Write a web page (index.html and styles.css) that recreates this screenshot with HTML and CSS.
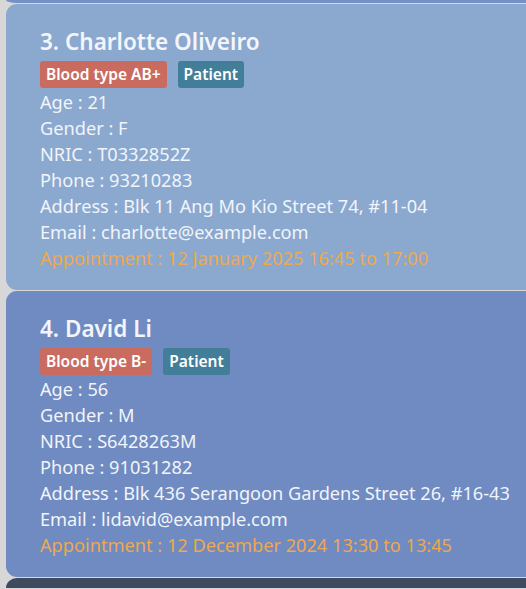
FILE: index.html
```html
<!DOCTYPE html>
<html lang="en">
<head>
<meta charset="utf-8">
<title>Patients</title>
<link rel="stylesheet" href="styles.css">
</head>
<body>
<div class="list">
  <div class="card-tail"></div>
  <div class="card card-light">
    <div class="name">3. Charlotte Oliveiro</div>
    <div class="tags">
      <span class="tag tag-blood">Blood type AB+</span>
      <span class="tag tag-role">Patient</span>
    </div>
    <div class="field">Age : 21</div>
    <div class="field">Gender : F</div>
    <div class="field">NRIC : T0332852Z</div>
    <div class="field">Phone : 93210283</div>
    <div class="field">Address : Blk 11 Ang Mo Kio Street 74, #11-04</div>
    <div class="field">Email : charlotte@example.com</div>
    <div class="field appt">Appointment : 12 January 2025 16:45 to 17:00</div>
  </div>
  <div class="card card-mid">
    <div class="name">4. David Li</div>
    <div class="tags">
      <span class="tag tag-blood">Blood type B-</span>
      <span class="tag tag-role">Patient</span>
    </div>
    <div class="field">Age : 56</div>
    <div class="field">Gender : M</div>
    <div class="field">NRIC : S6428263M</div>
    <div class="field">Phone : 91031282</div>
    <div class="field">Address : Blk 436 Serangoon Gardens Street 26, #16-43</div>
    <div class="field">Email : lidavid@example.com</div>
    <div class="field appt">Appointment : 12 December 2024 13:30 to 13:45</div>
  </div>
  <div class="card-peek"></div>
</div>
</body>
</html>
```
FILE: styles.css
```css
html, body {
  margin: 0;
  padding: 0;
  height: 589px;
  overflow: hidden;
  background: #d7d7d7;
  font-family: "Noto Sans", "Open Sans", sans-serif;
}

.list {
  display: flex;
  flex-direction: column;
  gap: 1px;
  margin-left: 6px;
  width: 520px;
}

.card-tail {
  height: 3px;
  background: #7591c4;
  border-bottom-left-radius: 11px 3px;
}

.card {
  border-radius: 11px 0 0 11px;
  padding: 23px 0 19px 34px;
  height: 244px;
  color: #f1f4fa;
}

.card-light { background: #8ba9cf; }
.card-mid { background: #6f8bc1; }

.card-peek {
  height: 10px;
  background: #3e4a5d;
  border-top-left-radius: 11px 10px;
}

.name {
  font-size: 22.5px;
  font-weight: 600;
  line-height: 30px;
  color: #f3f5fa;
}

.tags {
  display: flex;
  gap: 11px;
  margin-top: 4px;
  margin-bottom: 1px;
}

.tag {
  height: 27px;
  line-height: 27px;
  padding: 0 6px;
  border-radius: 3px;
  font-size: 15.5px;
  font-weight: 600;
  color: #ffffff;
}

.tag-blood { background: #c96c5f; }
.tag-role { background: #437e98; }

.field {
  font-size: 18.2px;
  line-height: 26px;
  white-space: nowrap;
}

.appt {
  color: #eea84d;
}
```
